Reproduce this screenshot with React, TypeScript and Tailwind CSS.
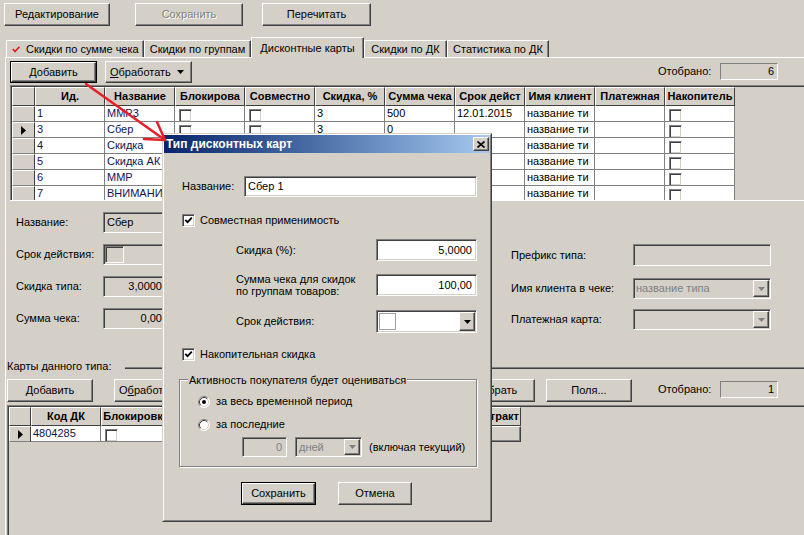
import React from "react";

type P = { className?: string; children?: React.ReactNode };

const RAISED =
  "border border-t-white border-l-white border-r-[#404040] border-b-[#404040] shadow-[inset_-1px_-1px_0_#808080]";
const SUNKEN =
  "border border-t-[#808080] border-l-[#808080] border-r-white border-b-white shadow-[inset_1px_1px_0_#404040,inset_-1px_-1px_0_#d4d0c8]";
const THIN = "border border-t-[#808080] border-l-[#808080] border-r-white border-b-white";
const DIS = "text-[#808080] [text-shadow:1px_1px_0_#ffffff]";
const HDR =
  "shrink-0 bg-[#d4d0c8] border border-t-white border-l-white border-r-[#404040] border-b-[#404040]";
const IND =
  "shrink-0 bg-[#d4d0c8] border border-t-white border-l-white border-r-[#404040] border-b-[#808080]";
const TAB =
  "shrink-0 border-t border-l border-r border-t-white border-l-white border-r-[#404040] shadow-[inset_-1px_0_0_#808080]";

function Btn({ className = "", def = false, children }: P & { def?: boolean }) {
  return (
    <div className={`shrink-0 ${def ? "border border-black" : ""} ${className}`}>
      <div className={`flex h-full w-full items-center justify-center bg-[#d4d0c8] ${RAISED}`}>{children}</div>
    </div>
  );
}

function Arrow({ disabled = false }: { disabled?: boolean }) {
  return (
    <svg width="7" height="4" viewBox="0 0 7 4" className="block">
      <polygon points="0,0 7,0 3.5,4" fill={disabled ? "#808080" : "#000000"} />
    </svg>
  );
}

function DropBtn({ disabled = false, className = "" }: { disabled?: boolean; className?: string }) {
  return (
    <div className={`ml-auto flex shrink-0 items-center justify-center bg-[#d4d0c8] ${RAISED} ${className}`}>
      <Arrow disabled={disabled} />
    </div>
  );
}

function Check({ checked = false, className = "" }: { checked?: boolean; className?: string }) {
  return (
    <div className={`relative h-[13px] w-[13px] shrink-0 bg-white ${SUNKEN} ${className}`}>
      {checked && (
        <svg className="absolute left-[1px] top-[1px]" width="9" height="9" viewBox="0 0 9 9">
          <path d="M1.3 3.8 L3.6 6.2 L7.8 1.6" stroke="#000000" strokeWidth="1.8" fill="none" />
        </svg>
      )}
    </div>
  );
}

function Radio({ checked = false }: { checked?: boolean }) {
  return (
    <svg width="12" height="12" viewBox="0 0 12 12" className="block shrink-0">
      <circle cx="6" cy="6" r="5.5" fill="#ffffff" />
      <path d="M2.11 9.89 A5.5 5.5 0 0 1 9.89 2.11" stroke="#808080" fill="none" />
      <path d="M9.89 2.11 A5.5 5.5 0 0 1 2.11 9.89" stroke="#ffffff" fill="none" />
      <path d="M2.82 9.18 A4.5 4.5 0 0 1 9.18 2.82" stroke="#404040" fill="none" />
      <path d="M9.18 2.82 A4.5 4.5 0 0 1 2.82 9.18" stroke="#d4d0c8" fill="none" />
      {checked && <circle cx="6" cy="6" r="2" fill="#000000" />}
    </svg>
  );
}

function RowMark() {
  return (
    <svg width="5" height="9" viewBox="0 0 5 9" className="block">
      <polygon points="0,0 5,4.5 0,9" fill="#000000" />
    </svg>
  );
}

const CB = "#cb";
const TOP_COLS = [
  "Ид.",
  "Название",
  "Блокирова",
  "Совместно",
  "Скидка, %",
  "Сумма чека",
  "Срок дейст",
  "Имя клиент",
  "Платежная",
  "Накопитель",
];
const TOP_ROWS: string[][] = [
  ["1", "ММР3", CB, CB, "3", "500", "12.01.2015", "название ти", "", CB],
  ["3", "Сбер", CB, CB, "3", "0", "", "название ти", "", CB],
  ["4", "Скидка", CB, CB, "3", "0", "", "название ти", "", CB],
  ["5", "Скидка АК", CB, CB, "3", "0", "", "название ти", "", CB],
  ["6", "ММР", CB, CB, "3", "0", "", "название ти", "", CB],
  ["7", "ВНИМАНИ", CB, CB, "3", "0", "", "название ти", "", CB],
];

function DataCell({ v, i }: { v: string; i: number }) {
  return (
    <div className="flex h-full w-[70px] shrink-0 items-center overflow-hidden whitespace-nowrap border-b border-r border-[#808080] bg-white px-[2px]">
      {v === CB ? (
        <Check className="ml-[2px] mt-[3px] self-start" />
      ) : (
        <span className={i < 2 ? "text-[#121250]" : "text-black"}>{v}</span>
      )}
    </div>
  );
}

function TopGrid() {
  return (
    <div className="ml-[4px] mt-[2px] h-[115px] overflow-hidden border-l border-t border-[#808080]">
      <div className="h-full border-l border-t border-[#404040]">
        <div className="flex h-[19px]">
          <div className={`h-full w-[23px] ${HDR}`} />
          {TOP_COLS.map((c) => (
            <div
              key={c}
              className={`flex h-full w-[70px] items-center justify-center overflow-hidden whitespace-nowrap font-bold ${HDR}`}
            >
              {c}
            </div>
          ))}
        </div>
        {TOP_ROWS.map((r, ri) => (
          <div key={ri} className="flex h-[16px]">
            <div className={`flex h-full w-[23px] items-center justify-center ${IND}`}>{ri === 1 && <RowMark />}</div>
            {r.map((v, i) => (
              <DataCell key={i} v={v} i={i} />
            ))}
          </div>
        ))}
      </div>
    </div>
  );
}

function BottomGrid() {
  const cols = ["Код ДК", "Блокировка", "", "", "", ""];
  return (
    <div className="ml-[1px] mt-[3px] flex-1 overflow-hidden border-l border-t border-[#808080]">
      <div className="h-full border-l border-t border-[#404040]">
        <div className="flex h-[19px]">
          <div className={`h-full w-[22px] ${HDR}`} />
          {cols.map((c, i) => (
            <div
              key={i}
              className={`flex h-full w-[70px] items-center justify-center overflow-hidden whitespace-nowrap font-bold ${HDR}`}
            >
              {c}
            </div>
          ))}
          <div className={`flex h-full w-[70px] items-center justify-end overflow-hidden whitespace-nowrap pr-[1px] font-bold ${HDR}`}>
            Контракт
          </div>
        </div>
        <div className="flex h-[16px]">
          <div className={`flex h-full w-[22px] items-center justify-center ${IND}`}>
            <RowMark />
          </div>
          <DataCell v="4804285" i={0} />
          <DataCell v={CB} i={2} />
          <DataCell v="" i={2} />
          <DataCell v="" i={2} />
          <DataCell v="" i={2} />
          <DataCell v="" i={2} />
          <div className={`h-full w-[70px] ${RAISED} bg-[#d4d0c8]`} />
        </div>
      </div>
    </div>
  );
}

function Counter({ value }: { value: string }) {
  return (
    <div className="ml-auto mr-[26px] mt-[2px] flex h-[17px] shrink-0">
      <div className="flex w-[62px] items-center">Отобрано:</div>
      <div className={`flex h-full w-[58px] items-center justify-end bg-[#d4d0c8] pr-[3px] ${THIN}`}>{value}</div>
    </div>
  );
}

function Dialog() {
  return (
    <div className="absolute left-[162px] top-[133px] z-20 h-[389px] w-[330px] border border-b-[#404040] border-l-[#d4d0c8] border-r-[#404040] border-t-[#d4d0c8] bg-[#d4d0c8]">
      <div className="flex h-full flex-col border border-b-[#808080] border-l-white border-r-[#808080] border-t-white">
        <div className="flex h-[18px] shrink-0 items-center bg-linear-to-r from-[#0a246a] to-[#a6caf0] pl-[2px] pr-[1px]">
          <span className="text-[12px] font-bold text-white">Тип дисконтных карт</span>
          <div className={`ml-auto flex h-[14px] w-[16px] items-center justify-center bg-[#d4d0c8] ${RAISED}`}>
            <svg width="8" height="7" viewBox="0 0 8 7" className="block">
              <path d="M0.5 0.5 L7.5 6.5 M7.5 0.5 L0.5 6.5" stroke="#000000" strokeWidth="1.6" />
            </svg>
          </div>
        </div>
        <div className="flex flex-col pl-[18px]">
          <div className="mt-[23px] flex h-[21px] items-center">
            <span className="w-[62px]">Название:</span>
            <div className={`flex h-full w-[233px] items-center bg-white pl-[3px] ${SUNKEN}`}>Сбер 1</div>
          </div>
          <div className="mt-[17px] flex h-[13px] items-center">
            <Check checked />
            <span className="ml-[5px]">Совместная применимость</span>
          </div>
          <div className="mt-[12px] flex h-[22px] items-center pl-[54px]">
            <span className="w-[140px]">Скидка (%):</span>
            <div className={`flex h-full w-[101px] items-center justify-end bg-white pr-[4px] ${SUNKEN}`}>5,0000</div>
          </div>
          <div className="mt-[13px] flex h-[22px] items-center pl-[54px]">
            <span className="w-[140px] leading-[12px]">
              Сумма чека для скидок
              <br />
              по группам товаров:
            </span>
            <div className={`flex h-full w-[101px] items-center justify-end bg-white pr-[4px] ${SUNKEN}`}>100,00</div>
          </div>
          <div className="mt-[14px] flex h-[23px] items-center pl-[54px]">
            <span className="w-[140px]">Срок действия:</span>
            <div className={`flex h-full w-[101px] items-center bg-white pl-[2px] pr-[1px] ${SUNKEN}`}>
              <div className="h-[17px] w-[17px] border border-[#a0a0a0] bg-white" />
              <DropBtn className="h-[19px] w-[16px]" />
            </div>
          </div>
          <div className="mt-[15px] flex h-[13px] items-center">
            <Check checked />
            <span className="ml-[5px]">Накопительная скидка</span>
          </div>
          <div className="relative -ml-[3px] mt-[18px] h-[88px] w-[298px] border border-[#808080] shadow-[inset_1px_1px_0_#ffffff,1px_1px_0_#ffffff]">
            <span className="absolute -top-[6px] left-[8px] bg-[#d4d0c8] px-[1px]">Активность покупателя будет оцениваться</span>
            <div className="mt-[15px] flex h-[13px] items-center pl-[18px]">
              <Radio checked />
              <span className="ml-[6px]">за весь временной период</span>
            </div>
            <div className="mt-[10px] flex h-[13px] items-center pl-[18px]">
              <Radio />
              <span className="ml-[6px]">за последние</span>
            </div>
            <div className="mt-[6px] flex h-[20px] items-center pl-[62px]">
              <div className={`flex h-full w-[45px] items-center justify-end bg-[#d4d0c8] pr-[4px] ${SUNKEN}`}>
                <span className="text-[#808080]">0</span>
              </div>
              <div className={`ml-[8px] flex h-full w-[67px] items-center bg-[#d4d0c8] pl-[3px] pr-[1px] ${SUNKEN}`}>
                <span className="text-[#808080]">дней</span>
                <DropBtn disabled className="h-[16px] w-[16px]" />
              </div>
              <span className="ml-[7px]">(включая текущий)</span>
            </div>
          </div>
          <div className="mt-[15px] flex h-[23px] pl-[59px]">
            <Btn def className="w-[75px]">
              Сохранить
            </Btn>
            <Btn className="ml-[22px] w-[74px]">Отмена</Btn>
          </div>
        </div>
      </div>
    </div>
  );
}

export default function App() {
  return (
    <div className="relative flex h-[535px] w-[804px] flex-col overflow-hidden bg-[#d4d0c8] font-['Liberation_Sans',Arial,sans-serif] text-[11px] leading-[13px] text-black">
      {/* top toolbar */}
      <div className="ml-[4px] mt-[3px] flex h-[23px] shrink-0">
        <Btn className="w-[106px]">Редактирование</Btn>
        <Btn className="ml-[25px] w-[108px]">
          <span className={DIS}>Сохранить</span>
        </Btn>
        <Btn className="ml-[19px] w-[109px]">Перечитать</Btn>
      </div>

      {/* tabs */}
      <div className="ml-[6px] mt-[11px] flex h-[20px] shrink-0 items-end">
        <div className={`flex h-[17px] w-[138px] items-center pl-[5px] ${TAB}`}>
          <svg width="8" height="7" viewBox="0 0 8 7" className="block">
            <path d="M0.8 3 L3 5.6 L7.4 0.8" stroke="#e01818" strokeWidth="1.5" fill="none" />
          </svg>
          <span className="ml-[6px]">Скидки по сумме чека</span>
        </div>
        <div className={`flex h-[17px] w-[107px] items-center justify-center ${TAB}`}>Скидки по группам</div>
        <div className={`relative z-10 -mb-px flex h-[21px] w-[113px] items-center justify-center bg-[#d4d0c8] ${TAB}`}>
          Дисконтные карты
        </div>
        <div className={`flex h-[17px] w-[83px] items-center justify-center ${TAB}`}>Скидки по ДК</div>
        <div className={`flex h-[17px] w-[102px] items-center justify-center ${TAB}`}>Статистика по ДК</div>
      </div>

      {/* pane */}
      <div className="ml-[5px] flex flex-1 flex-col border-l border-t border-white">
        <div className="ml-[4px] mt-[3px] flex h-[22px] shrink-0">
          <Btn def className="w-[87px]">
            Добавить
          </Btn>
          <Btn className="ml-[8px] w-[87px]">
            <div className="flex w-full items-center justify-between pl-[4px] pr-[7px]">
              <span>
                <span className="underline">О</span>бработать
              </span>
              <Arrow />
            </div>
          </Btn>
          <Counter value="6" />
        </div>

        <TopGrid />

        {/* detail panel */}
        <div className="ml-[4px] flex h-[160px] shrink-0 border-t border-white">
          <div className="ml-[6px] flex flex-col gap-[11px] pt-[11px]">
            <div className="flex h-[21px] items-center">
              <span className="w-[87px]">Название:</span>
              <div className={`flex h-full w-[64px] items-center bg-[#d4d0c8] pl-[3px] ${SUNKEN}`}>Сбер</div>
            </div>
            <div className="flex h-[21px] items-center">
              <span className="w-[87px]">Срок действия:</span>
              <div className={`flex h-full w-[64px] items-center bg-[#d4d0c8] pl-[1px] ${SUNKEN}`}>
                <div className="h-[17px] w-[19px] border border-b-white border-l-[#808080] border-r-white border-t-[#808080] shadow-[inset_1px_1px_0_#404040]" />
              </div>
            </div>
            <div className="flex h-[21px] items-center">
              <span className="w-[87px]">Скидка типа:</span>
              <div className={`flex h-full w-[64px] items-center justify-end bg-[#d4d0c8] pr-[4px] ${SUNKEN}`}>3,0000</div>
            </div>
            <div className="flex h-[21px] items-center">
              <span className="w-[87px]">Сумма чека:</span>
              <div className={`flex h-full w-[64px] items-center justify-end bg-[#d4d0c8] pr-[4px] ${SUNKEN}`}>0,00</div>
            </div>
          </div>
          <div className="ml-[344px] flex flex-col pt-[43px]">
            <div className="flex h-[22px] items-center">
              <span className="w-[122px]">Префикс типа:</span>
              <div className={`h-full w-[138px] bg-[#d4d0c8] ${SUNKEN}`} />
            </div>
            <div className="mt-[12px] flex h-[21px] items-center">
              <span className="w-[122px]">Имя клиента в чеке:</span>
              <div className={`flex h-full w-[138px] items-center bg-[#d4d0c8] pl-[2px] pr-[1px] ${SUNKEN}`}>
                <span className="text-[#808080]">название типа</span>
                <DropBtn disabled className="h-[17px] w-[16px]" />
              </div>
            </div>
            <div className="mt-[10px] flex h-[21px] items-center">
              <span className="w-[122px]">Платежная карта:</span>
              <div className={`flex h-full w-[138px] items-center bg-[#d4d0c8] pl-[2px] pr-[1px] ${SUNKEN}`}>
                <DropBtn disabled className="h-[17px] w-[16px]" />
              </div>
            </div>
          </div>
        </div>

        {/* section label */}
        <div className="ml-[1px] flex h-[13px] shrink-0">
          <span className="whitespace-nowrap">Карты данного типа:</span>
          <div className="ml-[14px] mt-[7px] h-[2px] flex-1 border-t border-b border-t-[#808080] border-b-[#404040]" />
        </div>

        {/* bottom toolbar */}
        <div className="ml-[1px] mt-[6px] flex h-[23px] shrink-0">
          <Btn className="w-[86px]">Добавить</Btn>
          <Btn className="ml-[21px] w-[86px]">
            <div className="flex w-full items-center justify-between pl-[4px] pr-[7px]">
              <span>
                О<span className="underline">б</span>работать
              </span>
              <Arrow />
            </div>
          </Btn>
          <Btn className="ml-[251px] w-[84px]">Отобрать</Btn>
          <Btn className="ml-[11px] w-[86px]">Поля...</Btn>
          <Counter value="1" />
        </div>

        <BottomGrid />
      </div>

      <Dialog />

      <svg className="pointer-events-none absolute left-0 top-0 z-30" width="804" height="535">
        <g stroke="#e3202a" strokeWidth="2.5" strokeLinecap="round" strokeLinejoin="round" fill="none">
          <line x1="86" y1="84" x2="165" y2="140" />
          <polyline points="157,122 165,140 144,139" />
        </g>
      </svg>
    </div>
  );
}
